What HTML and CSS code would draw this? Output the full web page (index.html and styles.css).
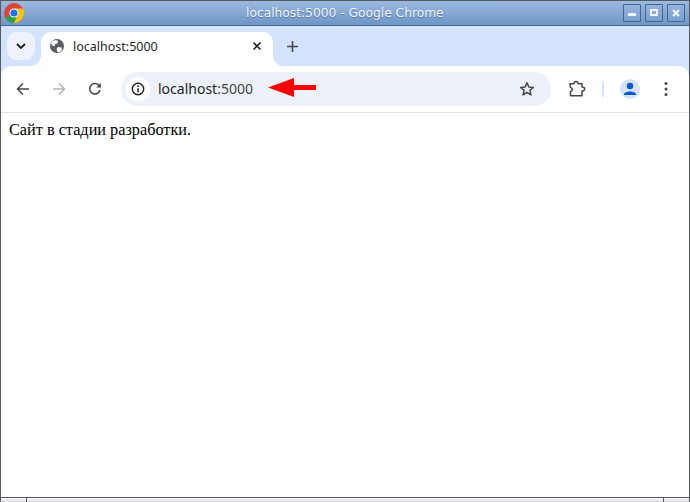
FILE: index.html
```html
<!DOCTYPE html>
<html lang="ru">
<head>
<meta charset="utf-8">
<title>localhost:5000 - Google Chrome</title>
<link rel="stylesheet" href="styles.css">
</head>
<body>
<div class="window">
  <header class="titlebar">
    <svg class="app-icon" viewBox="0 0 20 20" width="20" height="20">
      <circle cx="10" cy="10" r="10" fill="#db4437"/>
      <path d="M10 10 L1.3 15 A10 10 0 0 0 10 20 L15 11 Z" fill="#2f9e48"/>
      <path d="M10 5.5 H19 A10 10 0 0 1 10 20 L14 11 Z" fill="#f4c20d"/>
      <path d="M1.3 5 L5.6 12.5 L10 10 Z" fill="#db4437"/>
      <circle cx="10" cy="10" r="4.6" fill="#fff"/>
      <circle cx="10" cy="10" r="3.6" fill="#1a73e8"/>
    </svg>
    <span class="title">localhost:5000 - Google Chrome</span>
    <div class="win-buttons">
      <button class="win-btn" aria-label="Свернуть"><span class="g-min"></span></button>
      <button class="win-btn" aria-label="Развернуть"><span class="g-max"></span></button>
      <button class="win-btn" aria-label="Закрыть">
        <svg viewBox="0 0 8 8" width="8" height="8"><path d="M1 1 L7 7 M7 1 L1 7" stroke="#eef3fa" stroke-width="2.2" fill="none"/></svg>
      </button>
    </div>
  </header>

  <div class="tabstrip">
    <button class="tab-search" aria-label="Поиск по вкладкам">
      <svg viewBox="0 0 10 6" width="10" height="6"><path d="M1 1 L5 5 L9 1" stroke="#1f1f1f" stroke-width="1.8" fill="none"/></svg>
    </button>
    <div class="tab">
      <svg class="globe" viewBox="0 0 16 16" width="16" height="16">
        <circle cx="8" cy="8" r="7" fill="#5a5e63"/>
        <path d="M3 3 C5 2 8 2 9 3 L8.5 5.5 L6 6 L6 8 L4 8 L2 6 Z M9 9 L12.5 9.5 L13 12 L10.5 14 L8.5 14 L7.5 11 Z" fill="#fff"/>
      </svg>
      <span class="tab-label">localhost:5000</span>
      <svg class="tab-close" viewBox="0 0 10 10" width="10" height="10"><path d="M1.5 1.5 L8.5 8.5 M8.5 1.5 L1.5 8.5" stroke="#1f1f1f" stroke-width="1.6" fill="none"/></svg>
    </div>
    <svg class="new-tab" viewBox="0 0 11 11" width="11" height="11"><path d="M5.5 0 V11 M0 5.5 H11" stroke="#474747" stroke-width="1.6" fill="none"/></svg>
  </div>

  <nav class="toolbar">
    <div class="nav-icons">
      <svg viewBox="0 0 14 14" width="14" height="14"><path d="M13 7 H2 M7 1.5 L1.5 7 L7 12.5" stroke="#474747" stroke-width="1.5" fill="none"/></svg>
      <svg viewBox="0 0 14 14" width="14" height="14"><path d="M1 7 H12 M7 1.5 L12.5 7 L7 12.5" stroke="#b4b5b7" stroke-width="1.5" fill="none"/></svg>
      <svg viewBox="0 0 14 14" width="14" height="14"><path d="M12 8 A5.2 5.2 0 1 1 10.7 3.2 L12.4 5" stroke="#474747" stroke-width="1.5" fill="none"/><path d="M12.8 1 V5.6 H8.2 Z" fill="#474747"/></svg>
    </div>
    <div class="omnibox">
      <span class="info-chip">
        <svg viewBox="0 0 14 14" width="14" height="14"><circle cx="7" cy="7" r="5.7" stroke="#1f1f1f" stroke-width="1.4" fill="none"/><path d="M7 6.2 V10.2" stroke="#1f1f1f" stroke-width="1.5"/><circle cx="7" cy="4.2" r="0.9" fill="#1f1f1f"/></svg>
      </span>
      <span class="url"><span class="host">localhost</span><span class="port">:5000</span></span>
      <svg class="star" viewBox="0 0 16 16" width="16" height="16"><path d="M8 1.8 L9.8 6 L14.4 6.4 L10.9 9.4 L12 13.9 L8 11.5 L4 13.9 L5.1 9.4 L1.6 6.4 L6.2 6 Z" stroke="#474747" stroke-width="1.5" fill="none" stroke-linejoin="round"/></svg>
    </div>
    <div class="actions">
      <svg class="ext" viewBox="0 0 18 18" width="18" height="18"><path d="M1 3.8 H5 C5 0.8 9 0.8 9 3.8 H13 V7 C16.5 7 16.5 11 13 11 V15.7 H1.5 V11.5 C4 11 4 8 1.5 7.5 Z" stroke="#474747" stroke-width="1.5" fill="none" stroke-linejoin="round"/></svg>
      <span class="divider"></span>
      <span class="avatar">
        <svg viewBox="0 0 20 20" width="20" height="20"><circle cx="10" cy="7" r="3.2" fill="#0b57d0"/><path d="M4 15.5 C4 11.5 16 11.5 16 15.5 V16 H4 Z" fill="#0b57d0"/></svg>
      </span>
      <svg class="kebab" viewBox="0 0 4 16" width="4" height="16"><circle cx="2" cy="2.5" r="1.5" fill="#474747"/><circle cx="2" cy="8" r="1.5" fill="#474747"/><circle cx="2" cy="13.5" r="1.5" fill="#474747"/></svg>
    </div>
  </nav>

  <main class="content">
    <p class="message">Сайт в стадии разработки.</p>
    <svg class="arrow" viewBox="0 0 49 20" width="49" height="20"><path d="M0 9.5 L26 0 L26 7 L48 7 L48 12 L26 12 L26 19 Z" fill="#fe0000"/></svg>
  </main>

  <footer class="grips">
    <span class="grip grip-left"></span>
    <span class="grip grip-mid"></span>
    <span class="grip grip-right"></span>
  </footer>
</div>
</body>
</html>
```

FILE: styles.css
```css
* { box-sizing: border-box; }
html, body { margin: 0; padding: 0; width: 690px; height: 502px; overflow: hidden; background: #fff; }

.window {
  width: 690px;
  height: 502px;
  display: flex;
  flex-direction: column;
  background: #d3e3fd;
  border-top: 1px solid #555a60;
  border-left: 1px solid #555a60;
  border-right: 1px solid #555a60;
  font-family: "Noto Sans", sans-serif;
}

.titlebar {
  flex: 0 0 25px;
  display: flex;
  align-items: center;
  padding: 0 4px 1px 3px;
  background: linear-gradient(#9cbae0, #6e96c7);
  border-bottom: 1px solid #46688f;
}
.app-icon { flex: none; }
.title {
  flex: 1;
  padding-left: 222px;
  font: 12.25px "DejaVu Sans", sans-serif;
  color: #fff;
  text-shadow: 0 1px 1px #4a6f9e;
  opacity: .9;
  white-space: nowrap;
}
.win-buttons { display: flex; gap: 4px; }
.win-btn {
  width: 18px;
  height: 18px;
  padding: 0;
  display: flex;
  align-items: center;
  justify-content: center;
  background: linear-gradient(#94b3da, #7ba0cf);
  border: 1px solid #44658f;
  border-radius: 1px;
}
.g-min { width: 8px; height: 3px; background: #eef3fa; margin-top: 4px; }
.g-max { width: 8px; height: 7px; border: 2px solid #eef3fa; }

.tabstrip {
  flex: 0 0 40px;
  display: flex;
  align-items: flex-start;
  padding: 6px 0 0 6px;
  background: #d3e3fd;
}
.tab-search {
  width: 28px;
  height: 28px;
  padding: 0;
  border: 0;
  border-radius: 9px;
  background: #edf2fc;
  display: flex;
  align-items: center;
  justify-content: center;
}
.tab {
  position: relative;
  width: 232px;
  height: 34px;
  margin-left: 6px;
  padding: 0 11px 6px 8px;
  display: flex;
  align-items: center;
  background: #fff;
  border-radius: 10px 10px 0 0;
}
.tab::before, .tab::after {
  content: "";
  position: absolute;
  bottom: 0;
  width: 10px;
  height: 10px;
}
.tab::before { left: -10px; background: radial-gradient(circle at 0 0, #d3e3fd 9.5px, #fff 10px); }
.tab::after { right: -10px; background: radial-gradient(circle at 100% 0, #d3e3fd 9.5px, #fff 10px); }
.globe { flex: none; }
.tab-label {
  flex: 1;
  margin-left: 8px;
  font-size: 12.5px;
  color: #1f1f1f;
}
.tab-close { flex: none; }
.new-tab { margin: 9px 0 0 14px; }

.toolbar {
  flex: 0 0 47px;
  display: flex;
  align-items: flex-start;
  padding-top: 6px;
  background: #fff;
  border-radius: 10px 10px 0 0;
  border-bottom: 1px solid #e1e3e6;
}
.nav-icons {
  width: 120px;
  height: 34px;
  display: flex;
  align-items: center;
  gap: 22px;
  padding-left: 15px;
}
.omnibox {
  width: 430px;
  height: 34px;
  display: flex;
  align-items: center;
  padding: 0 16px 0 5px;
  background: #edf2fa;
  border-radius: 17px;
}
.info-chip {
  width: 24px;
  height: 24px;
  flex: none;
  display: flex;
  align-items: center;
  justify-content: center;
  background: #fff;
  border-radius: 50%;
}
.url { flex: 1; margin: 0 0 2px 8px; font-size: 14px; white-space: nowrap; }
.host { color: #1f1f1f; }
.port { color: #474747; }
.star { flex: none; }
.actions {
  height: 34px;
  display: flex;
  align-items: center;
  padding-left: 18px;
}
.ext { flex: none; }
.divider { width: 2px; height: 16px; margin-left: 15px; background: #d3e3fd; }
.avatar {
  width: 20px;
  height: 20px;
  margin-left: 16px;
  background: #d3e3fd;
  border-radius: 50%;
}
.avatar svg { display: block; }
.kebab { margin-left: 24px; }

.content {
  position: relative;
  flex: 1;
  padding: 8px;
  background: #fff;
}
.message {
  margin: 0;
  font: 16.25px/18px "Liberation Serif", serif;
  color: #000;
}
.arrow { position: absolute; left: 267px; top: -35px; }

.grips {
  flex: 0 0 5px;
  display: flex;
  gap: 1px;
  border-top: 1px solid #555a60;
  background: #555a60;
}
.grip { background: linear-gradient(#fff, #d5d8dc); }
.grip-left { width: 25px; }
.grip-mid { flex: 1; }
.grip-right { width: 25px; }
```
